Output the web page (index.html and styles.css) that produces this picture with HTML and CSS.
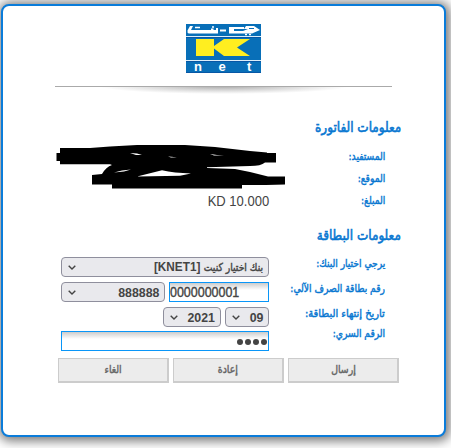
FILE: index.html
```html
<!DOCTYPE html>
<html lang="ar" dir="rtl">
<head>
<meta charset="utf-8">
<title>KNET</title>
<link rel="stylesheet" href="styles.css">
</head>
<body>
<main class="card">
  <svg class="logo" viewBox="0 0 75 49" direction="ltr">
    <rect width="75" height="49" fill="#086fb8"/>
    <path d="M0 12.5H75M0 36.500H75" stroke="#dceefa" stroke-width="1"/>
    <path d="M0 13.500H75M0 37.500H75M0 48.5H75" stroke="#0757a5"/>
    <path d="M10 15H28V22L38 15H64L51 23.500L64 32H38L28 24.500V32H10Z" fill="#ffee20"/>
    <path d="M4 2H7L5 6H25V4.500H27.500V6H30V4H32V9.500H3Q1 9 1.500 6.500ZM34 5.500H40V7.500H34ZM43 3H58V5H48V7H57L62 5H58L60 2H68L74 6L66 9.500H43Z" fill="#fff"/>
    <path d="M9 3.500H14M26 3H28M59 10.500H61M63 10.500H65" stroke="#fff" stroke-width="1.500"/>
    <path d="M63 4.500H68" stroke="#086fb8"/>
    <g fill="#fff" class="logo-text"><text x="8" y="47">n</text><text x="32.500" y="47">e</text><text x="61" y="47">t</text></g>
  </svg>
  <svg class="rule" viewBox="0 0 338 12">
    <defs><radialGradient id="shade" gradientUnits="userSpaceOnUse" cx="0" cy="0" r="1" gradientTransform="translate(169 0) scale(125 8)"><stop offset="0" stop-color="#888" stop-opacity=".75"/><stop offset="1" stop-color="#999" stop-opacity="0"/></radialGradient></defs>
    <rect y="1" width="338" height="10" fill="url(#shade)"/>
    <path d="M0 .5H337" stroke="#aaa"/>
  </svg>

  <section class="invoice">
    <h2><span class="t">معلومات الفاتورة</span></h2>
    <div class="row"><span class="label"><span class="t">المستفيد:</span></span></div>
    <div class="row"><span class="label"><span class="t">الموقع:</span></span></div>
    <div class="row"><span class="label"><span class="t">المبلغ:</span></span><span class="amount" dir="ltr">KD 10.000</span></div>
    <svg class="scribble" viewBox="56 144 230 46">
      <path d="M60 148H90L110 146.500L137 145H185L215 147L250 151L267 152.500V153H276V162.500H265Q261 166 250 166L207 167.300V168L235 169L250 172L266 176L268 176.500H285V184.500L266 185H242V188.500H112V184.500H92V175L102 174Q106 167 112 165L110 164.300H60V161H56.500V153H60Z"/>
      <path d="M137 176.500L162 170.300Q174 173 191 173.500L180 175.800Z M114 172.500L122 170.500L131 169.500L124 171.500Z M130 153L137 153.500L142 155L136 155Z M168 156.500L177 157.300L171 157.600Z M210 154L217 155L224 155.500L214 155.600Z" fill="#fff"/>
    </svg>
  </section>

  <section class="payment">
    <h2><span class="t">معلومات البطاقة</span></h2>
    <div class="row"><span class="label"><span class="t">يرجي اختيار البنك:</span></span>
      <span class="select bank"><span class="value"><span class="t">بنك اختيار كنيت</span><bdi>[KNET1]</bdi></span><svg class="chev" viewBox="0 0 8 5"><path d="M.7.7L4 4L7.300.7"/></svg></span></div>
    <div class="row"><span class="label"><span class="t">رقم بطاقة الصرف الآلي:</span></span>
      <span class="input number" dir="ltr"><span class="digits">0000000001</span></span>
      <span class="select prefix"><span class="num">888888</span><svg class="chev" viewBox="0 0 8 5"><path d="M.7.7L4 4L7.300.7"/></svg></span></div>
    <div class="row"><span class="label"><span class="t wide">تاريخ إنتهاء البطاقة:</span></span>
      <span class="select month"><span class="num">09</span><svg class="chev" viewBox="0 0 8 5"><path d="M.7.7L4 4L7.300.7"/></svg></span>
      <span class="select year"><span class="num">2021</span><svg class="chev" viewBox="0 0 8 5"><path d="M.7.7L4 4L7.300.7"/></svg></span></div>
    <div class="row"><span class="label pin-label"><span class="t">الرقم السري:</span></span>
      <span class="input pin"><i></i><i></i><i></i><i></i></span></div>
  </section>

  <div class="actions">
    <button><span class="t">إرسال</span></button><button><span class="t">إعادة</span></button><button><span class="t">الغاء</span></button>
  </div>
</main>
</body>
</html>
```
FILE: styles.css
```css
* { box-sizing: border-box; }
html { overflow: hidden; background: #fff; }
body { margin: 0; padding: 4px 5px 0 1px; font-family: "Liberation Sans", "DejaVu Sans", sans-serif; color: #444; overflow: hidden; height: 448px; }
.card { position: relative; height: 433px; border: 2px solid #0a7cda; border-radius: 8px; background: #fff; box-shadow: 1px 1px 11px 3px #777; }
.logo { display: block; width: 75px; height: 49px; margin: 18px 183px 0 auto; }
.logo-text { font: bold 13px "Liberation Sans", sans-serif; }
.rule { display: block; width: 338px; height: 12px; margin: 13px 51px 0 auto; }
.t { display: inline-block; white-space: nowrap; font-family: "DejaVu Sans", sans-serif; font-weight: normal; -webkit-text-stroke: .45px currentColor; transform: scaleX(.83); transform-origin: right; }
.t.wide { transform: scaleX(.9); }
h2 { margin: 0; height: 28px; line-height: 28px; font-size: 14px; color: #0877d1; padding-right: 43px; }
h2 .t { transform: scaleX(.86); -webkit-text-stroke-width: .6px; }
.invoice { margin-top: 15px; }
.invoice h2 { height: 32px; }
.invoice .row { height: 22px; }
.row { display: flex; align-items: center; padding-right: 59px; }
.label { flex: none; width: 116px; font-size: 11px; color: #0877d1; white-space: nowrap; }
.amount { font-size: 14px; line-height: 22px; transform: translateY(1px) scaleX(.93); transform-origin: right; }
.scribble { position: absolute; left: 53px; top: 138px; width: 230px; height: 46px; }
.payment { margin-top: 10px; }
.payment h2 { height: 36px; line-height: 28px; }
.payment .row { height: 20px; margin-bottom: 5px; }
.payment .row:last-child { margin: -1px 0 0; }
.payment .label { transform: translateY(-4px); }
.payment .pin-label { transform: translateY(-8px); }
.select { display: flex; align-items: center; justify-content: space-between; height: 20px; border: 1px solid #8f8f9d; border-radius: 4px; background: #e9e9ed; padding: 0 5px 0 6px; font-size: 12px; font-weight: bold; white-space: nowrap; }
.num { font-size: 13px; transform: translateY(-.5px) scaleX(.95); transform-origin: right; }
.chev { width: 8px; height: 5px; fill: none; stroke: #444; stroke-width: 1.4; }
.bank { width: 208px; }
.value { display: flex; align-items: center; }
.bank .t { width: 63px; font-size: 11px; transform: scaleX(.84); }
.bank bdi { transform: scaleX(.98); transform-origin: right; }
.input { height: 20px; border: 1px solid #0996f8; background: linear-gradient(#ccc, #fff 7px); font-size: 14px; line-height: 18px; }
.number { width: 100px; margin-left: 4px; }
.digits { display: inline-block; transform: scaleX(.89); transform-origin: left; -webkit-text-stroke: .4px #444; }
.prefix { width: 104px; }
.month { width: 44px; margin-left: 4px; }
.year { width: 58px; }
.pin { width: 208px; display: flex; gap: 2px; align-items: center; padding: 2px 1px 0; }
.pin i { width: 6px; height: 6px; border-radius: 50%; background: #444; }
.actions { display: flex; gap: 4px; margin: 7px 45px 0 0; }
button { width: 111px; height: 25px; padding: 0; border: 1px solid #ccc; border-right-width: 2px; border-bottom-width: 2px; background: #ececec; font: 11px "DejaVu Sans", sans-serif; color: #666; }
button .t { transform-origin: center; transform: translateY(-1px) scaleX(.85); }
```
